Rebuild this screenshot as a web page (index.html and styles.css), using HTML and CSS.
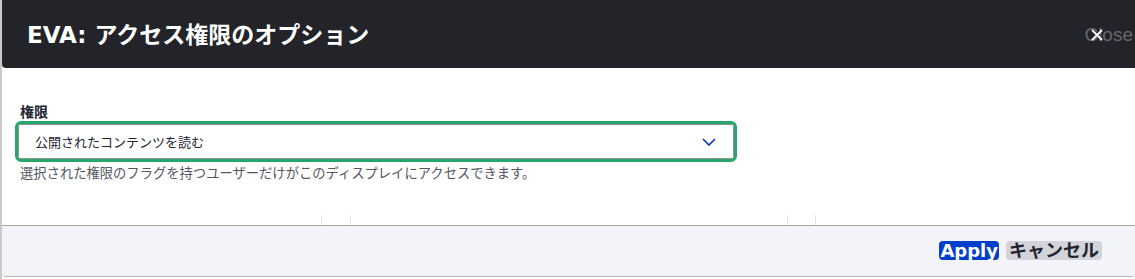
FILE: index.html
```html
<!DOCTYPE html>
<html lang="ja">
<head>
<meta charset="utf-8">
<title>EVA: アクセス権限のオプション</title>
<link rel="stylesheet" href="styles.css">
</head>
<body>
<div class="page">
  <div class="dialog">
    <div class="titlebar">
      <h1 class="title">EVA: アクセス権限のオプション</h1>
      <button class="close" type="button">Close<svg class="close-x" viewBox="0 0 14 14" width="14" height="14"><path d="M2 2 L12 12 M12 2 L2 12" stroke="#ffffff" stroke-width="1.8" fill="none"/></svg></button>
    </div>
    <div class="content">
      <div class="field">
        <label class="label">権限</label>
        <div class="select-focus">
          <div class="select">
            <span class="select-text">公開されたコンテンツを読む</span>
            <svg class="chevron" viewBox="0 0 14 8" width="14" height="8"><path d="M1 1 L7 7 L13 1" stroke="#0036b1" stroke-width="1.6" fill="none"/></svg>
          </div>
        </div>
        <div class="description">選択された権限のフラグを持つユーザーだけがこのディスプレイにアクセスできます。</div>
      </div>
      <div class="peek">
        <div class="peek-cell c1"></div>
        <div class="peek-cell c2"></div>
        <div class="peek-cell c3"></div>
        <div class="peek-cell c4"></div>
        <div class="peek-cell c5"></div>
      </div>
    </div>
    <div class="footer">
      <button class="btn btn-primary" type="button">Apply</button>
      <button class="btn btn-secondary" type="button">キャンセル</button>
    </div>
  </div>
</div>
</body>
</html>
```
FILE: styles.css
```css
html, body {
  margin: 0;
  padding: 0;
  overflow: hidden;
}
body {
  background: #ffffff;
  font-family: "Noto Sans CJK JP", "Liberation Sans", sans-serif;
  width: 1135px;
  height: 279px;
}
.page {
  display: flex;
  height: 279px;
  background: linear-gradient(to right, #c9c9c9 0, #c9c9c9 2px, #ffffff 2px);
}
.dialog {
  margin-left: 2px;
  width: 1133px;
  height: 276px;
  display: flex;
  flex-direction: column;
  background: #ffffff;
  border-radius: 0 0 4px 4px;
  overflow: hidden;
  border-bottom: 1px solid #b4b4b4;
}
.titlebar {
  height: 68px;
  flex: none;
  background: #232429;
  border-radius: 0 0 0 4px;
  display: flex;
  align-items: center;
  justify-content: space-between;
  padding-left: 25px;
  box-sizing: border-box;
}
.title {
  margin: 0;
  color: #ffffff;
  font-family: "DejaVu Sans", "Noto Sans CJK JP", sans-serif;
  font-weight: bold;
  font-size: 23px;
  line-height: 30px;
  padding-top: 2px;
}
.close {
  position: relative;
  background: none;
  border: 0;
  padding: 0;
  margin-right: 2px;
  margin-top: 2px;
  font-family: "Liberation Sans", sans-serif;
  font-size: 19px;
  color: #66686e;
  line-height: 20px;
}
.close-x {
  position: absolute;
  left: 6px;
  top: 3px;
}
.content {
  flex: 1;
  display: flex;
  flex-direction: column;
  justify-content: space-between;
  padding: 34px 0 0 0;
}
.field {
  padding-left: 13px;
}
.label {
  display: block;
  font-size: 14px;
  font-weight: bold;
  color: #222330;
  line-height: 18px;
  padding-left: 5px;
  margin-bottom: 1px;
}
.select-focus {
  width: 722px;
  height: 41px;
  box-sizing: border-box;
  border: 3px solid #26a769;
  border-radius: 6px;
}
.select {
  height: 35px;
  box-sizing: border-box;
  border: 1px solid #919297;
  border-radius: 2px;
  display: flex;
  align-items: center;
  justify-content: space-between;
  padding: 0 17px 0 16px;
}
.select-text {
  font-size: 13px;
  color: #222330;
  line-height: 18px;
}
.chevron {
  margin-top: 1px;
}
.description {
  font-size: 13.3px;
  color: #545560;
  line-height: 18px;
  padding-left: 5px;
  margin-top: 2px;
}
.peek {
  height: 10px;
  display: grid;
  grid-template-columns: 320px 29px 437px 28px 1fr;
}
.peek-cell {
  border-right: 1px solid #e4e4e6;
}
.peek-cell.c5 {
  border-right: 0;
}
.footer {
  flex: none;
  height: 51px;
  box-sizing: border-box;
  border-top: 1px solid #a6a6ab;
  background: #f3f4f9;
  display: flex;
  align-items: center;
  justify-content: flex-end;
  gap: 7px;
  padding-right: 33px;
  padding-bottom: 2px;
}
.btn {
  border: 0;
  border-radius: 4px;
  font-family: "DejaVu Sans", "Noto Sans CJK JP", sans-serif;
  font-weight: bold;
  font-size: 18px;
  line-height: 19px;
  height: 19px;
  padding: 0 1px;
  display: flex;
  align-items: center;
}
.btn-primary {
  background: #003ecc;
  color: #ffffff;
}
.btn-secondary {
  background: #d3d4d9;
  color: #222330;
  padding: 0 3px;
}
```
